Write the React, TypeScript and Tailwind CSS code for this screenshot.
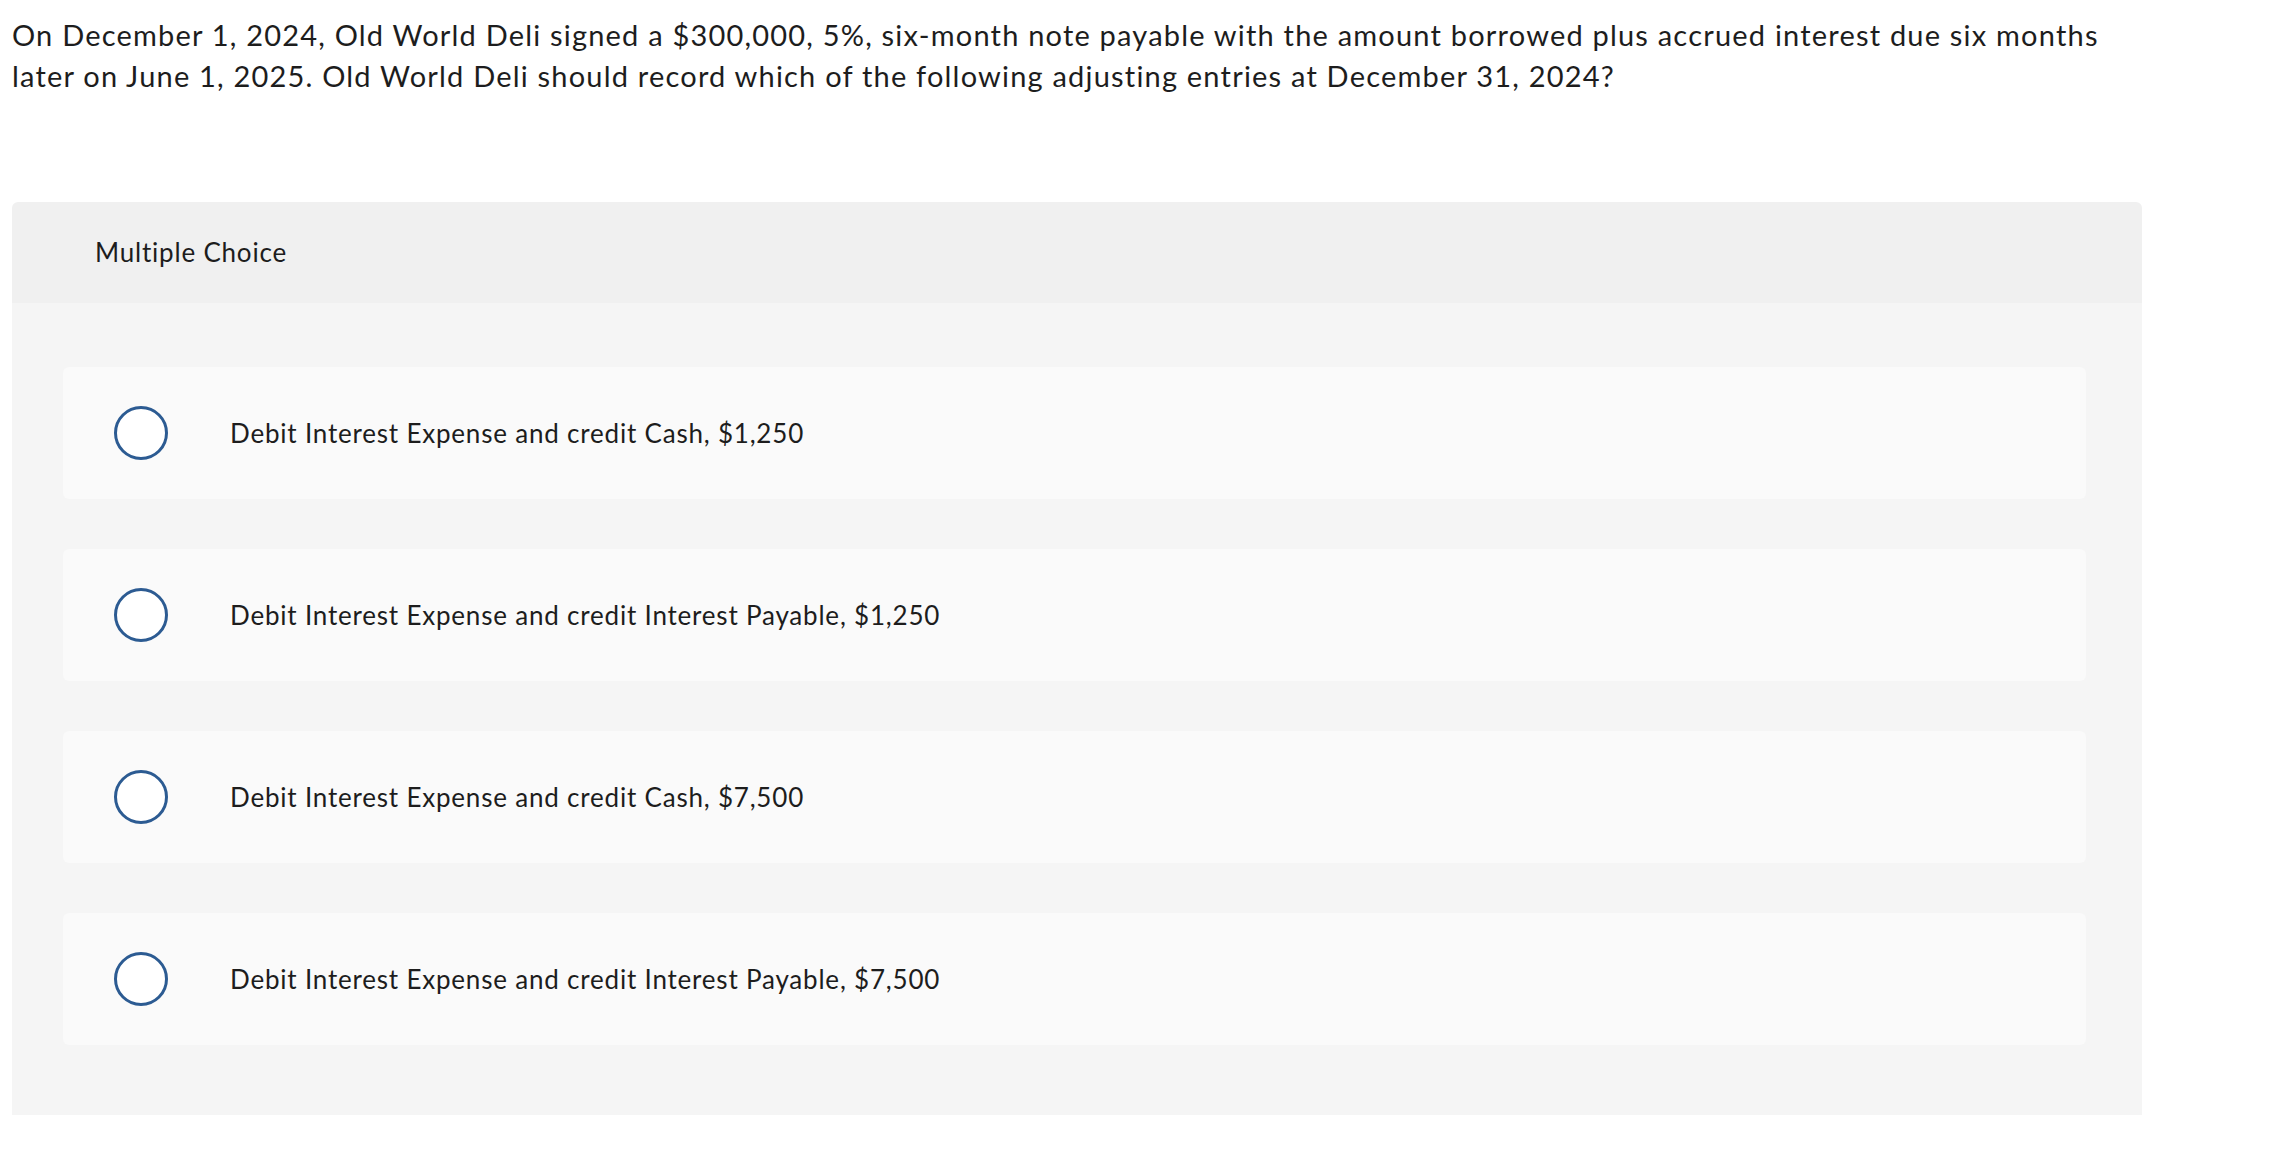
const options = [
  'Debit Interest Expense and credit Cash, $1,250',
  'Debit Interest Expense and credit Interest Payable, $1,250',
  'Debit Interest Expense and credit Cash, $7,500',
  'Debit Interest Expense and credit Interest Payable, $7,500',
]

export default function App() {
  return (
    <div className="min-h-screen bg-white pl-[12px] pt-[14px] text-[#1d1d1d]" style={{ fontFamily: 'Lato, "Open Sans", sans-serif' }}>
      <p className="w-[2140px] text-[29px] leading-[41px] tracking-[1.2px]">
        On December 1, 2024, Old World Deli signed a $300,000, 5%, six-month note payable with the amount borrowed plus accrued interest due six months later on June 1, 2025. Old World Deli should record which of the following adjusting entries at December 31, 2024?
      </p>

      <div className="mt-[106px] w-[2130px] overflow-hidden rounded-t-[6px]">
        <div className="flex h-[101px] items-center bg-[#f0f0f0] pl-[83px] text-[26px] tracking-[0.8px]">Multiple Choice</div>
        <div className="flex flex-col gap-[50px] bg-[#f5f5f5] pb-[70px] pl-[51px] pr-[56px] pt-[64px]">
          {options.map((o) => (
            <div key={o} className="flex h-[132px] items-center rounded-[6px] bg-[#fafafa] pl-[51px]">
              <span className="h-[54px] w-[54px] shrink-0 rounded-full border-[3px] border-[#2c5b92] bg-white" />
              <span className="ml-[62px] text-[26px] tracking-[0.8px]">{o}</span>
            </div>
          ))}
        </div>
      </div>
    </div>
  )
}
